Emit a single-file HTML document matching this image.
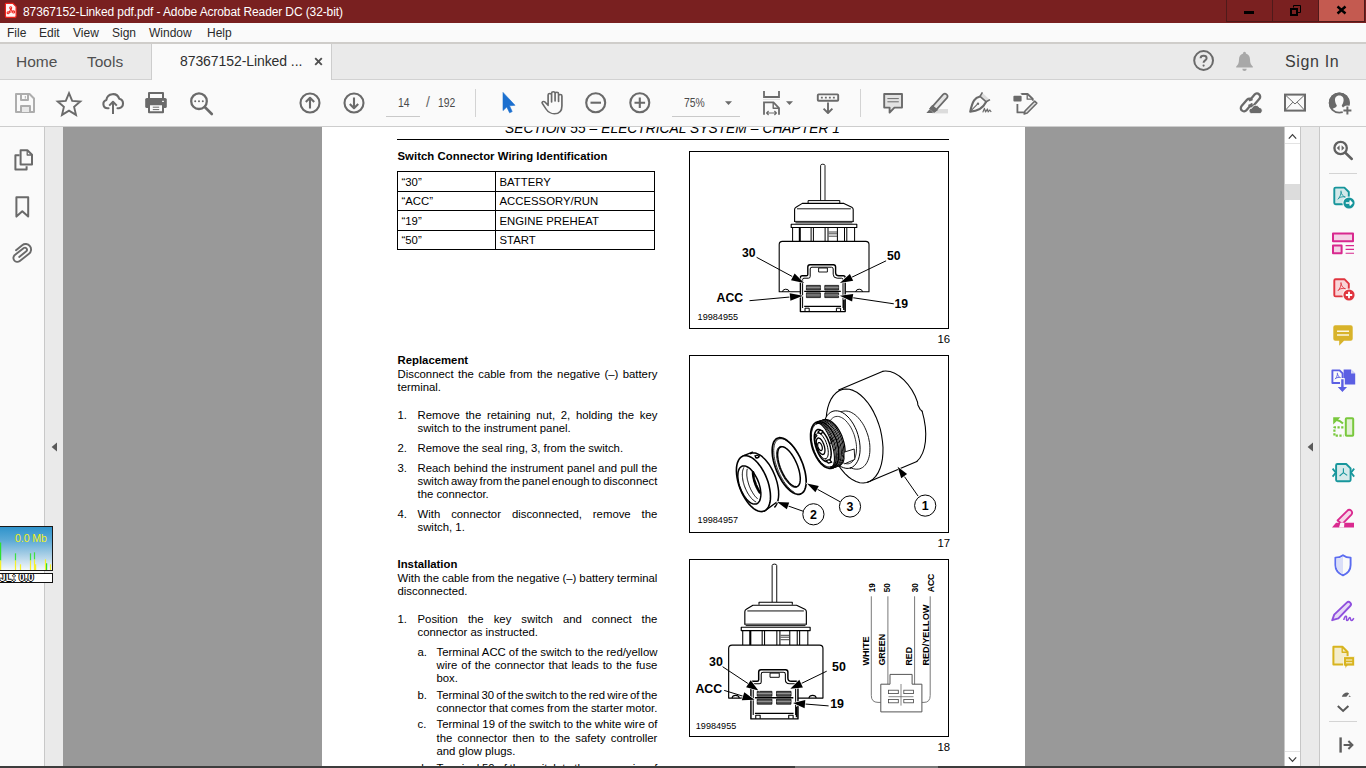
<!DOCTYPE html>
<html><head><meta charset="utf-8"><title>87367152-Linked pdf.pdf - Adobe Acrobat Reader DC (32-bit)</title>
<style>
*{box-sizing:border-box;margin:0;padding:0}
html,body{width:1366px;height:768px;overflow:hidden;background:#999;font-family:"Liberation Sans",sans-serif}
.abs{position:absolute}
#titlebar{position:absolute;left:0;top:0;width:1366px;height:23px;background:#792020}
#titlebar .t{position:absolute;left:23px;top:5px;font-size:12px;color:#fff;white-space:pre;letter-spacing:-0.11px;line-height:14px}
#menubar{position:absolute;left:0;top:23px;width:1366px;height:19px;background:#fafafa}
#menubar span{position:absolute;top:3px;font-size:12px;color:#2b2b2b;line-height:14px}
#menuline{position:absolute;left:0;top:42px;width:1366px;height:2px;background:#cfcdca}
#tabbar{z-index:2;position:absolute;left:0;top:44px;width:1366px;height:35px;background:#eaeaea}
#tabline{position:absolute;left:0;top:79px;width:1366px;height:1px;background:#d2d2d2}
#toolbar{position:absolute;left:0;top:80px;width:1366px;height:46px;background:#fafafa}
#toolline{position:absolute;left:0;top:126px;width:1366px;height:1px;background:#cdcdcd}
#docbg{position:absolute;left:63px;top:127px;width:1221px;height:639px;background:#999}
#page{position:absolute;left:322px;top:127px;width:703px;height:639px;background:#fff;overflow:hidden}
#leftpanel{position:absolute;left:0;top:127px;width:44px;height:639px;background:#fafafa}
#leftborder{position:absolute;left:44px;top:127px;width:1px;height:639px;background:#c8c8c8}
#leftsplit{position:absolute;left:45px;top:127px;width:18px;height:639px;background:#eaeaea}
#vscroll{position:absolute;left:1284px;top:127px;width:17px;height:639px;background:#fff;border-left:1px solid #c9c9c9;border-right:1px solid #c6c6c6}
#rightsplit{position:absolute;left:1301px;top:127px;width:18px;height:639px;background:#eaeaea}
#rightborder{position:absolute;left:1319px;top:127px;width:1px;height:639px;background:#c8c8c8}
#rightpanel{position:absolute;left:1320px;top:127px;width:46px;height:639px;background:#fafafa}
#bottombar{position:absolute;left:0;top:766px;width:1366px;height:2px;background:#3d3d3d}
.doc{font-size:11.35px;color:#000;line-height:13px}
.doc .l{position:absolute;white-space:pre}
.doc .j{position:absolute;white-space:nowrap;text-align:justify;text-align-last:justify}
.doc b{font-weight:bold}
.tb{font-size:12.5px;color:#4a4a4a;line-height:14px;white-space:pre;transform:scaleX(0.83);transform-origin:0 0}
</style></head><body>
<div id="titlebar"><svg class="abs" style="left:3.5px;top:2.4px" width="14" height="16.8" viewBox="0 0 15 18">
<path d="M2.2 1.5 H9.5 L13 5 V15 Q13 16.5 11.5 16.5 H2.8 Q1.5 16.5 1.5 15 V2.6 Q1.5 1.5 2.2 1.5 Z" fill="#fff4f2" stroke="#f0221c" stroke-width="1.3"/>
<g fill="none" stroke="#f0221c" stroke-width="1.1"><circle cx="7.2" cy="6.2" r="1.1"/><circle cx="4.4" cy="11.6" r="1.1"/><circle cx="10.3" cy="10.6" r="1.1"/><path d="M7.2 7.3 Q6.8 9.5 5.2 10.9 M7.4 7.3 Q8 9.2 9.4 10.1 M5.5 11.3 Q7.5 10.3 9.2 10.5"/></g>
</svg>
<div class="abs" style="left:1226px;top:0;width:47px;height:22px;border:1px solid #4f1a1a;border-top:none;background:#7a2020"></div>
<div class="abs" style="left:1272px;top:0;width:47px;height:22px;border:1px solid #4f1a1a;border-top:none;background:#7a2020"></div>
<div class="abs" style="left:1318px;top:0;width:47px;height:22px;border:1px solid #4f1a1a;border-top:none;background:#c45a50"></div>
<div class="abs" style="left:1244px;top:11px;width:10px;height:3px;background:#000"></div>
<svg class="abs" style="left:1288px;top:3px" width="15" height="14" viewBox="0 0 15 14"><path d="M5.5 4.5 V2.5 H12.5 V9.5 H10" fill="none" stroke="#000" stroke-width="1"/><rect x="3" y="6" width="6" height="6" fill="none" stroke="#000" stroke-width="2"/></svg>
<svg class="abs" style="left:1335px;top:5px" width="13" height="10" viewBox="0 0 13 10"><path d="M2.5 1.5 L10.5 8.5 M10.5 1.5 L2.5 8.5" stroke="#000" stroke-width="2.4" fill="none"/></svg>

<div class="t">87367152-Linked pdf.pdf - Adobe Acrobat Reader DC (32-bit)</div></div>
<div id="menubar"><span style="left:7px">File</span><span style="left:39px">Edit</span><span style="left:73px">View</span><span style="left:112px">Sign</span><span style="left:149px">Window</span><span style="left:207px">Help</span></div>
<div id="menuline"></div>
<div id="tabbar">
<div class="abs" style="left:16px;top:9px;font-size:15.5px;line-height:18px;color:#505050">Home</div>
<div class="abs" style="left:87px;top:9px;font-size:15.5px;line-height:18px;color:#505050">Tools</div>
<div class="abs" style="left:151px;top:0;width:181px;height:36px;background:#fafafa;border-left:1px solid #cdcdcd;border-right:1px solid #cdcdcd"></div>
<div class="abs" style="left:180px;top:9px;font-size:14px;line-height:16px;color:#2e2e2e;white-space:pre;letter-spacing:-0.08px">87367152-Linked ...</div>
<svg class="abs" style="left:313px;top:12px" width="11" height="11" viewBox="0 0 11 11"><path d="M2.2 2.2 L8.8 8.8 M8.8 2.2 L2.2 8.8" stroke="#505050" stroke-width="1.9"/></svg>
<svg class="abs" style="left:1190px;top:4px" width="70" height="28" viewBox="1190 48 70 28" fill="none">
<circle cx="1203.6" cy="60.5" r="9.4" stroke="#6a6a6a" stroke-width="2"/>
<path d="M1200.6 58.2 C1200.6 55 1206.6 55 1206.6 58.2 C1206.6 60.4 1203.6 60.4 1203.6 62.8" stroke="#6a6a6a" stroke-width="2"/>
<circle cx="1203.6" cy="65.6" r="1.1" fill="#6a6a6a"/>
<path d="M1244.5 51.8 C1245.6 51.8 1245.9 52.6 1245.9 53.4 C1248.8 54.2 1250 56.6 1250 59.6 C1250 63.4 1251.2 65.2 1252.8 66.6 V67.6 H1236.2 V66.6 C1237.8 65.2 1239 63.4 1239 59.6 C1239 56.6 1240.2 54.2 1243.1 53.4 C1243.1 52.6 1243.4 51.8 1244.5 51.8 Z" fill="#a8a8a8"/>
<path d="M1242.3 68.8 H1246.7 A2.2 2.2 0 0 1 1242.3 68.8 Z" fill="#a8a8a8"/>
</svg>
<div class="abs" style="left:1285px;top:8px;font-size:16px;line-height:20px;color:#3c3c3c;white-space:pre;letter-spacing:0.65px">Sign In</div>

</div>
<div id="tabline"></div>
<div id="toolbar">
<svg class="abs" style="left:0;top:0" width="1366" height="46" viewBox="0 80 1366 46" fill="none" stroke="#6a6a6a" stroke-width="2" stroke-linejoin="round" stroke-linecap="butt">
<!-- save (disabled) -->
<g stroke="#adadad">
<path d="M16 94 H29.5 L34 98.5 V112 H16 Z" fill="#fafafa"/>
<path d="M21 94 V100 H28 V94" />
<path d="M25.3 96 V98.6" stroke-width="1"/>
<path d="M21 112 V106 H30 V112" fill="#e9e9e9"/>
</g>
<!-- star -->
<path d="M69 93.2 L72.2 100.9 L80.3 101.5 L74.1 106.9 L76 114.9 L69 110.6 L62 114.9 L63.9 106.9 L57.7 101.5 L65.8 100.9 Z" stroke-width="1.9" stroke-linejoin="miter"/>
<!-- cloud upload -->
<path d="M108.5 108.3 H107.6 A4.3 4.3 0 0 1 106.4 99.9 A6.6 6.6 0 0 1 119.2 98.7 A4.9 4.9 0 0 1 119 108.3 H117.5" stroke-width="2.1" stroke-linecap="round"/>
<path d="M113 114 V102.3 M109.2 105.6 L113 101.8 L116.8 105.6" stroke-width="2"/>
<!-- printer -->
<g>
<rect x="149" y="93" width="14" height="6" stroke-width="2" fill="#fafafa"/>
<rect x="145.2" y="98" width="21.6" height="10" rx="1.6" fill="#6a6a6a" stroke="none"/>
<rect x="149" y="104.3" width="14" height="8" fill="#fafafa" stroke-width="2"/>
<path d="M152.8 107.2 H159.2 M152.8 109.6 H159.2" stroke-width="1"/>
<rect x="162" y="100.8" width="2" height="1.2" fill="#e8e8e8" stroke="none"/>
</g>
<!-- search -->
<circle cx="199" cy="101.2" r="7.8" stroke-width="2.3"/>
<path d="M204.8 107 L211.8 114" stroke-width="2.6" stroke-linecap="round"/>
<g fill="#6a6a6a" stroke="none"><circle cx="195.2" cy="101.2" r="1"/><circle cx="199" cy="101.2" r="1"/><circle cx="202.8" cy="101.2" r="1"/></g>
<!-- up / down -->
<circle cx="310" cy="103" r="9.5" stroke-width="2.1"/>
<path d="M310 108.6 V98.2 M305.8 102 L310 97.8 L314.2 102" stroke-width="2.1"/>
<circle cx="354" cy="103" r="9.5" stroke-width="2.1"/>
<path d="M354 97.4 V107.8 M349.8 104 L354 108.2 L358.2 104" stroke-width="2.1"/>
<!-- page field underline -->
<path d="M386 116.5 H420" stroke="#c9c9c9" stroke-width="1"/>
<path d="M475.5 89 V117" stroke="#d3d3d3" stroke-width="1"/>
<!-- pointer -->
<path d="M503 92.4 V110.6 L506.8 107 L509.6 112.8 L512.2 111.6 L509.5 105.8 L515 105.3 Z" fill="#1b6fcf" stroke="#1b6fcf" stroke-width="0.6"/>
<!-- hand -->
<path d="M547.2 104.5 V95 a1.5 1.5 0 0 1 3 0 V102 M550.2 100 V93.2 a1.5 1.5 0 0 1 3 0 V101 M553.2 100 V93.8 a1.5 1.5 0 0 1 3 0 V101.5 M556.2 101 V96 a1.45 1.45 0 0 1 2.9 0 V106 C559.1 111 556.5 113.8 552.6 113.8 C549.2 113.8 547.4 112.4 545.4 109 L542.2 103.4 C541.4 102 543.2 100.6 544.5 102 L547.2 105.4" stroke-width="1.45" stroke-linecap="round" transform="translate(541.5 0) scale(1.16 1) translate(-541.5 0)"/>
<!-- minus / plus -->
<circle cx="595.7" cy="102.7" r="9.5" stroke-width="2.1"/>
<path d="M590.5 102.7 H601" stroke-width="2.1"/>
<circle cx="639.8" cy="102.7" r="9.5" stroke-width="2.1"/>
<path d="M634.5 102.7 H645.1 M639.8 97.4 V108" stroke-width="2.1"/>
<!-- zoom field -->
<path d="M672 116.5 H740" stroke="#c9c9c9" stroke-width="1"/>
<path d="M725 101.3 H732 L728.5 105 Z" fill="#6a6a6a" stroke="none"/>
<!-- fit page -->
<path d="M764 91 V97 H779 V91" stroke-width="1.8" stroke-linejoin="miter"/>
<path d="M763 99.4 H780" stroke="#dedede" stroke-width="1"/>
<path d="M764 114.8 V102.4 H773.5 L779 108 V114.8" stroke-width="1.8" stroke-linejoin="miter"/>
<path d="M773.2 102.6 V108.2 H779" stroke-width="1.4"/>
<path d="M766.8 113 H776.2 M768.6 111 L766.6 113 L768.6 115 M774.4 111 L776.4 113 L774.4 115" stroke-width="1.2"/>
<path d="M786 101.3 H793 L789.5 105 Z" fill="#6a6a6a" stroke="none"/>
<!-- scroll/keyboard -->
<rect x="817.8" y="94.4" width="20.4" height="6.4" rx="0.8" stroke-width="1.9"/>
<path d="M820.9 97.6 H835.6" stroke-width="1.7" stroke-dasharray="1.9 2.1"/>
<path d="M828 102.6 V112.6 M823.6 108.6 L828 113 L832.4 108.6" stroke-width="1.9"/>
<path d="M860.5 89 V117" stroke="#d3d3d3" stroke-width="1"/>
<!-- comment -->
<path d="M884.2 94 H902 V107.6 H894.4 L889.6 112.6 V107.6 H884.2 Z" fill="#e3e3e3" stroke-width="1.9"/>
<path d="M887.4 98.6 H898.8 M887.4 101.8 H898.8" stroke-width="1"/>
<!-- highlighter -->
<path d="M932 109 H948 V113.4 H932 Z" fill="#dcdcdc" stroke="none"/>
<path d="M943.2 94.4 L932.6 106.4 L936.4 109.6 L947.2 97.6 A2.6 2.6 0 0 0 943.2 94.4 Z" fill="#e3e3e3" stroke-width="1.7"/>
<path d="M932.2 105.4 L937.4 110 L934 112.4 L929.6 108.6 Z" fill="#6a6a6a" stroke-width="1"/>
<path d="M926.4 113 L929.6 109.2 L933.2 112.4 L931.8 113 Z" fill="#6a6a6a" stroke="none"/>
<!-- sign pen -->
<path d="M982 92.6 L989.6 99.4 L986.4 101.6 L980 96 Z" fill="#dedede" stroke="none"/>
<path d="M982.4 92.4 L980 96.4 L986.2 101.8 L990 99.6" stroke-width="1.6"/>
<path d="M980 96.4 C975 97.6 972.6 100.6 970.2 111.6 C977 111.4 982.6 109 986.2 101.8" stroke-width="2.1"/>
<path d="M970.4 111.4 L977.2 104.4" stroke-width="1.2"/><circle cx="978" cy="103.8" r="1.2" fill="#6a6a6a" stroke="none"/>
<path d="M982.8 112.4 L984.4 108.4 L985.6 112 L987.4 109 L988.2 112 L989.8 110 L991.2 112" stroke-width="1.2"/>
<!-- stamp/edit -->
<path d="M1021.4 94 H1027.6 L1032.8 99 V100.8 M1017.4 104 V112.4 H1024.6 M1021.4 94 V93.6" stroke-width="1.8"/>
<path d="M1027.2 93.8 V99.2 H1032.6" stroke-width="1.3"/>
<rect x="1013.4" y="95.8" width="8.2" height="5.8" rx="1" fill="#6a6a6a" stroke="none"/>
<path d="M1034.6 101.2 L1036.8 103.2 L1027.2 113 L1024.2 114 L1025 111 Z" fill="#e3e3e3" stroke-width="1.6"/>
<!-- link cloud -->
<path d="M1249.8 100.2 L1254.6 94.6 A3.1 3.1 0 0 1 1259.4 98.8 L1253.6 105.4 A3.1 3.1 0 0 1 1249.4 105.4" stroke-width="2.3" stroke-linecap="round"/>
<path d="M1251.6 104.2 L1246.4 110.2 A3.1 3.1 0 0 1 1241.6 106 L1247.2 99.6 A3.1 3.1 0 0 1 1251.6 99.6" stroke-width="2.3" stroke-linecap="round"/>
<path d="M1251.6 113.6 A2.7 2.7 0 0 1 1251.8 108.2 A4 4 0 0 1 1259.2 107.4 A3.2 3.2 0 0 1 1260.2 113.6 Z" fill="#6a6a6a" stroke="#fafafa" stroke-width="0.8"/>
<!-- mail -->
<rect x="1285" y="94.6" width="20" height="16" stroke-width="2" stroke-linejoin="miter"/>
<path d="M1285.6 95.2 L1295 104 L1304.4 95.2 M1285.6 110 L1292.8 102.2 M1304.4 110 L1297.2 102.2" stroke-width="1"/>
<!-- user plus -->
<circle cx="1339.3" cy="103" r="10.5" fill="#6a6a6a" stroke="none"/>
<path d="M1339.3 95.6 C1342.6 95.6 1343.8 98 1343.6 100.6 C1343.4 103 1342.4 104.4 1341.8 105.2 C1341.6 106.8 1343 107.4 1346.6 109 C1347.4 109.4 1347.6 110 1347.4 110.6 A10.5 10.5 0 0 1 1331.2 110.6 C1331 110 1331.2 109.4 1332 109 C1335.6 107.4 1337 106.8 1336.8 105.2 C1336.2 104.4 1335.2 103 1335 100.6 C1334.8 98 1336 95.6 1339.3 95.6 Z" fill="#fafafa" stroke="none"/>
<circle cx="1339.3" cy="103" r="9.7" fill="none" stroke="#6a6a6a" stroke-width="1.7"/>
<circle cx="1347.4" cy="110.4" r="5" fill="#fafafa" stroke="none"/>
<path d="M1343.4 110.4 H1351.4 M1347.4 106.4 V114.4" stroke-width="2"/>
</svg>
<div class="abs tb" style="left:397.5px;top:16px;width:12px;">14</div>
<div class="abs tb" style="left:426px;top:15px;font-size:14px;transform:none;color:#666">/</div>
<div class="abs tb" style="left:437.5px;top:16px;">192</div>
<div class="abs tb" style="left:683.5px;top:16px;">75%</div>

</div>
<div id="toolline"></div>
<div id="docbg"></div>
<div id="page" class="doc">
<div class="l" style="left:183px;top:-6px;font-size:13.8px;font-style:italic;line-height:16px;width:335px;text-align:justify;text-align-last:justify;white-space:nowrap">SECTION 55 – ELECTRICAL SYSTEM – CHAPTER 1</div>
<div class="abs" style="left:75px;top:12px;width:552px;height:1px;background:#000"></div>
<div class="l" style="left:75.5px;top:23px;font-weight:bold;letter-spacing:0.04px;">Switch Connector Wiring Identification</div>
<div class="abs" style="left:75px;top:44px;width:258px;height:79px;border:1px solid #000"></div>
<div class="abs" style="left:173px;top:44px;width:1px;height:79px;background:#000"></div>
<div class="abs" style="left:75px;top:64px;width:258px;height:1px;background:#000"></div>
<div class="abs" style="left:75px;top:83px;width:258px;height:1px;background:#000"></div>
<div class="abs" style="left:75px;top:103px;width:258px;height:1px;background:#000"></div>
<div class="l" style="left:79.5px;top:49px;">“30”</div>
<div class="l" style="left:177.5px;top:49px;">BATTERY</div>
<div class="l" style="left:79.5px;top:68px;">“ACC”</div>
<div class="l" style="left:177.5px;top:68px;">ACCESSORY/RUN</div>
<div class="l" style="left:79.5px;top:88px;">“19”</div>
<div class="l" style="left:177.5px;top:88px;">ENGINE PREHEAT</div>
<div class="l" style="left:79.5px;top:107px;">“50”</div>
<div class="l" style="left:177.5px;top:107px;">START</div>
<div class="l" style="left:75.5px;top:227px;font-weight:bold;">Replacement</div>
<div class="l" style="left:75.5px;top:241px;word-spacing:1.273px;">Disconnect the cable from the negative (–) battery</div>
<div class="l" style="left:75.5px;top:254px;">terminal.</div>
<div class="l" style="left:75.5px;top:282px;">1.</div>
<div class="l" style="left:95.5px;top:282px;word-spacing:2.558px;">Remove the retaining nut, 2, holding the key</div>
<div class="l" style="left:95.5px;top:295px;">switch to the instrument panel.</div>
<div class="l" style="left:75.5px;top:315px;">2.</div>
<div class="l" style="left:95.5px;top:315px;">Remove the seal ring, 3, from the switch.</div>
<div class="l" style="left:75.5px;top:335px;">3.</div>
<div class="l" style="left:95.5px;top:335px;word-spacing:0.302px;">Reach behind the instrument panel and pull the</div>
<div class="l" style="left:95.5px;top:348px;word-spacing:-1.136px;">switch away from the panel enough to disconnect</div>
<div class="l" style="left:95.5px;top:361px;">the connector.</div>
<div class="l" style="left:75.5px;top:381px;">4.</div>
<div class="l" style="left:95.5px;top:381px;word-spacing:7.794px;">With connector disconnected, remove the</div>
<div class="l" style="left:95.5px;top:394px;">switch, 1.</div>
<div class="l" style="left:75.5px;top:431px;font-weight:bold;">Installation</div>
<div class="l" style="left:75.5px;top:445px;word-spacing:-0.146px;">With the cable from the negative (–) battery terminal</div>
<div class="l" style="left:75.5px;top:458px;">disconnected.</div>
<div class="l" style="left:75.5px;top:486px;">1.</div>
<div class="l" style="left:95.5px;top:486px;word-spacing:6.876px;">Position the key switch and connect the</div>
<div class="l" style="left:95.5px;top:499px;">connector as instructed.</div>
<div class="l" style="left:95.5px;top:519px;">a.</div>
<div class="l" style="left:114.5px;top:519px;word-spacing:-0.060px;">Terminal ACC of the switch to the red/yellow</div>
<div class="l" style="left:114.5px;top:532px;word-spacing:0.889px;">wire of the connector that leads to the fuse</div>
<div class="l" style="left:114.5px;top:545px;">box.</div>
<div class="l" style="left:95.5px;top:562px;">b.</div>
<div class="l" style="left:114.5px;top:562px;word-spacing:-1.053px;">Terminal 30 of the switch to the red wire of the</div>
<div class="l" style="left:114.5px;top:575px;word-spacing:-0.385px;">connector that comes from the starter motor.</div>
<div class="l" style="left:95.5px;top:591px;">c.</div>
<div class="l" style="left:114.5px;top:591px;word-spacing:-0.188px;">Terminal 19 of the switch to the white wire of</div>
<div class="l" style="left:114.5px;top:605px;word-spacing:2.027px;">the connector then to the safety controller</div>
<div class="l" style="left:114.5px;top:618px;">and glow plugs.</div>
<div class="l" style="left:95.5px;top:635px;">d.</div>
<div class="l" style="left:114.5px;top:635px;word-spacing:-0.469px;">Terminal 50 of the switch to the green wire of</div>
<div class="abs" style="left:367px;top:24px;width:260px;height:178px;border:1px solid #000"></div>
<div class="l" style="left:608px;top:206px;width:20px;text-align:right">16</div>
<div class="abs" style="left:367px;top:228px;width:260px;height:178px;border:1px solid #000"></div>
<div class="l" style="left:608px;top:410px;width:20px;text-align:right">17</div>
<div class="abs" style="left:367px;top:432px;width:260px;height:178px;border:1px solid #000"></div>
<div class="l" style="left:608px;top:614px;width:20px;text-align:right">18</div>
<svg class="abs" style="left:367px;top:24px" width="260" height="178" viewBox="689 151 260 178"><g transform="translate(0,0)" fill="none" stroke="#000" stroke-width="1" stroke-linejoin="round">
<path d="M820.6 200.4 V165.6 Q820.6 164.2 822.8 164.2 Q825 164.2 825 165.6 V200.4" stroke-width="0.9"/>
<path d="M808.1 203 V200.6 H839.8 V203" />
<path d="M794.6 222 V209.6 Q794.6 208 796 207.2 L802.3 203.4 H843.9 L851.8 207.2 Q853.2 208 853.2 209.6 V222" stroke-width="1.1"/>
<path d="M797 208.8 H850.8" stroke-width="0.9"/>
<path d="M794.6 221.4 H853.2 M795.4 222.8 H852.4" stroke-width="0.9"/>
<rect x="791.2" y="224.3" width="65.6" height="3.2" stroke-width="1.1"/>
<g stroke-width="1">
<path d="M792.6 227.6 V241.2"/>
<path d="M799.8 227.6 V241.2" stroke-width="2"/>
<path d="M811.1 227.6 V241.2 M813.4 227.6 V241.2"/>
<path d="M825.1 227.6 V241.2 M828 227.6 V241.2"/>
<path d="M837.4 227.6 V241.2"/>
<path d="M844.5 227.6 V241.2 M846.8 227.6 V241.2"/>
<path d="M854.6 227.6 V241.2"/>
<path d="M828.6 232 H837 M828.6 233.8 H837 M828.6 236.2 H837" stroke-width="0.9" stroke="#333"/>
</g>
<path d="M800.4 291.8 H779.2 V244.6 Q779.2 241.4 782.4 241.4 H865.8 Q869 241.4 869 244.6 V291.8 H845.2" stroke-width="1.1"/>
<path d="M782.4 291.8 Q782.8 289.2 785.8 289.2 Q788.8 289.2 789.4 291.8 M855.6 291.8 Q856.2 289.2 859.2 289.2 Q862.2 289.2 862.6 291.8" stroke-width="1"/>
<!-- connector outer -->
<path d="M800.4 311.6 V277.6 Q800.4 275.8 802.2 275.8 H806.4 Q807.8 275.8 807.8 274.4 V267 Q807.8 264.8 810 264.8 H833.4 Q835.6 264.8 835.6 267 V272.6 Q835.6 275.8 838.8 275.8 H843.4 Q845.2 275.8 845.2 277.6 V311.6 H800.4 Z" stroke-width="1.4"/>
<path d="M802.6 308 V279.6 Q802.6 278.2 804 278.2 H808.4 Q810.2 278.2 810.2 276.4 V269 Q810.2 267.2 812 267.2 H831.4 Q833.2 267.2 833.2 269 V274.2 Q833.2 278.2 837.2 278.2 H841.6 Q843 278.2 843 279.6 V308" stroke-width="1"/>
<path d="M804.2 306.4 H841" stroke-width="1.2"/>
<path d="M805 311.4 V308.2 H809.2 V311.4 M836.4 311.4 V308.2 H840.6 V311.4" stroke-width="1"/>
<path d="M843.9 300 V310" stroke-width="1.6"/>
<rect x="818.6" y="268" width="8.8" height="4" stroke-width="0.9"/>
<!-- terminals -->
<g fill="#555" stroke="#111" stroke-width="0.8">
<rect x="806.4" y="285.4" width="14" height="4.6"/><rect x="824.8" y="285.4" width="13.8" height="4.6"/>
<rect x="806.4" y="292.8" width="14" height="4.8"/><rect x="824.8" y="292.8" width="13.8" height="4.8"/>
</g>
<path d="M806.4 287.4 H820.4 M824.8 287.4 H838.6 M806.4 295 H820.4 M824.8 295 H838.6" stroke="#bbb" stroke-width="0.6"/>
<path d="M804.2 291.4 H840.8" stroke-width="1.4"/>
</g><path d="M756.6 257.3 L792.8 276.8" stroke="#000" stroke-width="1" fill="none"/><path d="M804.2 283.0 L791.0 280.2 L794.6 273.5 Z" fill="#000" stroke="#fff" stroke-width="1.2" paint-order="stroke"/><path d="M886.1 260.8 L851.5 277.4" stroke="#000" stroke-width="1" fill="none"/><path d="M839.8 283.0 L849.9 274.0 L853.2 280.8 Z" fill="#000" stroke="#fff" stroke-width="1.2" paint-order="stroke"/><path d="M749.5 300.7 L790.1 297.0" stroke="#000" stroke-width="1" fill="none"/><path d="M803.0 295.8 L790.4 300.8 L789.7 293.2 Z" fill="#000" stroke="#fff" stroke-width="1.2" paint-order="stroke"/><path d="M893.8 303.8 L852.7 297.7" stroke="#000" stroke-width="1" fill="none"/><path d="M839.8 295.8 L853.2 293.9 L852.1 301.5 Z" fill="#000" stroke="#fff" stroke-width="1.2" paint-order="stroke"/><g font-family="Liberation Sans" font-weight="bold" font-size="12.2" fill="#000"><text x="742" y="257.2">30</text><text x="887" y="259.6">50</text><text x="716.6" y="301.6">ACC</text><text x="894.4" y="307.8">19</text></g><text x="697.6" y="319.6" font-family="Liberation Sans" font-size="9.1" fill="#000">19984955</text></svg>
<svg class="abs" style="left:367px;top:228px" width="260" height="178" viewBox="689 355 260 178"><g fill="none" stroke="#000" stroke-linejoin="round" stroke-linecap="round"><path d="M838.7 389.9 L883.0 371.2" stroke-width="1.1" fill="none"/><path d="M883.0 371.2 C897.7 369.1 912.3 386.2 917.5 402.1" stroke-width="1.1"/><path d="M917.5 402.1 L917.9 404.9 L920.1 409.3 L922.1 411.2" stroke-width="1.1" fill="none"/><path d="M922.1 411.2 C928.6 433.4 926.2 452.9 916.9 461.4" stroke-width="1.1"/><path d="M916.9 461.4 L867.6 482.2" stroke-width="1.1" fill="none"/><path d="M866.7 482.5 L863.3 483.0 L859.7 482.7 L856.0 481.5 L852.2 479.6 L848.6 477.0 L845.0 473.6 L841.6 469.7 L838.4 465.1 L835.4 460.0 L832.8 454.5 L830.6 448.7 L828.8 442.7 L827.4 436.6 L826.5 430.5 L826.1 424.4 L826.1 418.6 L826.7 413.0 L827.7 407.8 L829.2 403.2 L831.1 399.1 L833.4 395.6 L836.1 392.8 L839.1 390.7 L842.3 389.4 L845.8 389.0 L849.4 389.3 L853.1 390.4 L856.8 392.3 L860.5 395.0 L864.1 398.3 L867.5 402.3 L870.7 406.9 L873.6 411.9 L876.2 417.4 L878.4 423.2 L880.3 429.2 L881.6 435.4 L882.5 441.5 L883.0 447.5 L882.9 453.4 L882.4 458.9 L881.4 464.1 L879.9 468.8 L878.0 472.9 L875.7 476.4 L873.0 479.2 L870.0 481.2 L866.7 482.5 Z" stroke-width="1.1" fill="none"/><path d="M835.1 417.8 L836.0 416.3 L837.1 414.9 L838.2 413.7 L839.5 412.7 L840.8 412.0 L842.3 411.4 L843.8 411.1 L845.3 411.0 L846.9 411.1 L848.5 411.4 L850.2 411.9 L851.8 412.7 L853.5 413.7 L855.1 414.8 L856.7 416.2 L858.2 417.7 L859.7 419.5 L861.1 421.3 L862.5 423.3 L863.8 425.5 L864.9 427.7 L866.0 430.1 L866.9 432.5 L867.8 435.0 L868.5 437.5 L869.0 440.0 L869.5 442.6 L869.8 445.1 L869.9 447.6 L869.9 450.0 L869.8 452.4 L869.5 454.6 L869.1 456.8 L868.5 458.8 L867.8 460.7 L867.0 462.4 L866.1 463.9 L865.0 465.3 L863.8 466.5 L862.6 467.5 L861.2 468.2 L859.8 468.8 L858.3 469.1 L856.8 469.2 L855.2 469.1 L853.6 468.8 L851.9 468.3 L850.3 467.5" stroke-width="0.9" fill="none"/><path d="M850.4 468.0 L848.2 468.4 L845.8 468.3 L843.5 467.7 L841.1 466.7 L838.7 465.1 L836.3 463.2 L834.1 460.8 L831.9 458.1 L830.0 455.0 L828.2 451.7 L826.7 448.2 L825.4 444.6 L824.4 440.8 L823.7 437.0 L823.3 433.3 L823.2 429.7 L823.5 426.2 L824.0 423.0 L824.9 420.1 L826.0 417.5 L827.4 415.2 L829.1 413.4 L830.9 412.1 L833.0 411.2 L835.2 410.8 L837.5 410.9 L839.9 411.4 L842.3 412.5 L844.7 414.0 L847.0 416.0 L849.3 418.3 L851.4 421.1 L853.4 424.1 L855.1 427.4 L856.7 430.9 L857.9 434.6 L858.9 438.4 L859.6 442.1 L860.0 445.9 L860.1 449.5 L859.9 452.9 L859.3 456.2 L858.5 459.1 L857.3 461.7 L855.9 463.9 L854.3 465.7 L852.4 467.1 L850.4 468.0 Z" stroke-width="1.0" fill="#fff"/><path d="M827.8 431.7 L827.9 429.5 L828.1 427.4 L828.5 425.4 L829.0 423.6 L829.7 421.9 L830.4 420.5 L831.3 419.2 L832.4 418.2 L833.5 417.4 L834.7 416.8 L835.9 416.5 L837.3 416.4 L838.7 416.5 L840.1 416.9 L841.6 417.6 L843.0 418.4 L844.5 419.5 L845.9 420.8 L847.3 422.4 L848.6 424.1 L849.9 425.9 L851.1 427.9 L852.2 430.1 L853.2 432.3 L854.1 434.6 L854.8 437.0 L855.4 439.4 L855.9 441.8 L856.3 444.2 L856.5 446.6 L856.5 448.8 L856.4 451.0 L856.2 453.1 L855.8 455.1 L855.3 456.9 L854.6 458.5 L853.8 459.9 L852.9 461.1 L851.9 462.2 L850.7 462.9 L849.5 463.5 L848.2 463.8 L846.9 463.8 L845.5 463.6 L844.0 463.2 L842.6 462.5 L841.1 461.6 L839.7 460.5" stroke-width="0.8" fill="none"/><path d="M838.5 466.1 L836.8 466.4 L835.1 466.3 L833.3 465.8 L831.5 464.9 L829.6 463.7 L827.8 462.1 L826.0 460.1 L824.3 457.9 L822.8 455.4 L821.3 452.7 L820.1 449.8 L819.0 446.9 L818.1 443.8 L817.4 440.7 L817.0 437.7 L816.8 434.8 L816.9 432.0 L817.2 429.4 L817.7 427.0 L818.5 424.9 L819.4 423.1 L820.6 421.6 L822.0 420.6 L823.5 419.8 L825.1 419.5 L826.8 419.6 L828.6 420.1 L830.5 421.0 L832.3 422.3 L834.1 423.9 L835.9 425.8 L837.6 428.0 L839.2 430.5 L840.6 433.2 L841.9 436.1 L842.9 439.1 L843.8 442.1 L844.5 445.2 L844.9 448.2 L845.1 451.1 L845.0 453.9 L844.7 456.5 L844.2 458.9 L843.5 461.0 L842.5 462.8 L841.3 464.3 L840.0 465.4 L838.5 466.1 Z" stroke-width="1.3" fill="#fff"/><path d="M844.3 452.1 L854.2 449.0 L854.8 459.4 L844.8 463.8" stroke-width="0.9" fill="#fff"/><path d="M837.2 466.5 L835.6 466.8 L833.9 466.7 L832.1 466.2 L830.2 465.3 L828.4 464.1 L826.6 462.5 L824.8 460.5 L823.1 458.3 L821.5 455.8 L820.1 453.1 L818.8 450.2 L817.7 447.3 L816.9 444.2 L816.2 441.1 L815.8 438.1 L815.6 435.2 L815.6 432.4 L815.9 429.8 L816.5 427.4 L817.2 425.3 L818.2 423.5 L819.4 422.0 L820.7 421.0 L822.2 420.3 L823.8 419.9 L825.6 420.0 L827.4 420.5 L829.2 421.4 L831.1 422.7 L832.9 424.3 L834.7 426.2 L836.4 428.4 L837.9 430.9 L839.4 433.6 L840.6 436.5 L841.7 439.5 L842.6 442.5 L843.2 445.6 L843.7 448.6 L843.9 451.5 L843.8 454.3 L843.5 457.0 L843.0 459.3 L842.2 461.4 L841.3 463.2 L840.1 464.7 L838.7 465.8 L837.2 466.5 Z" stroke-width="1.1" fill="#fff"/><path d="M836.0 466.9 L834.4 467.2 L832.6 467.1 L830.8 466.6 L829.0 465.7 L827.2 464.5 L825.3 462.9 L823.6 460.9 L821.9 458.7 L820.3 456.2 L818.9 453.5 L817.6 450.6 L816.5 447.7 L815.6 444.6 L815.0 441.5 L814.5 438.5 L814.4 435.6 L814.4 432.8 L814.7 430.2 L815.2 427.8 L816.0 425.7 L817.0 423.9 L818.1 422.4 L819.5 421.4 L821.0 420.7 L822.6 420.3 L824.3 420.4 L826.1 420.9 L828.0 421.8 L829.8 423.1 L831.7 424.7 L833.4 426.6 L835.1 428.8 L836.7 431.3 L838.1 434.0 L839.4 436.9 L840.5 439.9 L841.4 442.9 L842.0 446.0 L842.4 449.0 L842.6 451.9 L842.6 454.7 L842.3 457.4 L841.7 459.7 L841.0 461.8 L840.0 463.6 L838.8 465.1 L837.5 466.2 L836.0 466.9 Z" stroke-width="0.9" fill="#fff"/><path d="M834.8 467.3 L833.1 467.6 L831.4 467.5 L829.6 467.0 L827.8 466.1 L825.9 464.9 L824.1 463.3 L822.3 461.3 L820.6 459.1 L819.1 456.6 L817.6 453.9 L816.4 451.0 L815.3 448.1 L814.4 445.0 L813.7 441.9 L813.3 438.9 L813.1 436.0 L813.2 433.2 L813.5 430.6 L814.0 428.2 L814.8 426.1 L815.7 424.3 L816.9 422.9 L818.2 421.8 L819.7 421.1 L821.4 420.7 L823.1 420.8 L824.9 421.3 L826.7 422.2 L828.6 423.5 L830.4 425.1 L832.2 427.0 L833.9 429.2 L835.5 431.7 L836.9 434.4 L838.2 437.3 L839.2 440.3 L840.1 443.3 L840.8 446.4 L841.2 449.4 L841.4 452.3 L841.3 455.1 L841.0 457.8 L840.5 460.1 L839.7 462.2 L838.8 464.0 L837.6 465.5 L836.3 466.6 L834.8 467.3 Z" stroke-width="1.1" fill="#fff"/><path d="M833.5 467.7 L831.9 468.0 L830.2 467.9 L828.4 467.4 L826.5 466.5 L824.7 465.3 L822.9 463.7 L821.1 461.7 L819.4 459.5 L817.8 457.0 L816.4 454.3 L815.1 451.4 L814.0 448.5 L813.2 445.4 L812.5 442.3 L812.1 439.3 L811.9 436.4 L811.9 433.6 L812.2 431.0 L812.8 428.6 L813.5 426.5 L814.5 424.7 L815.7 423.3 L817.0 422.2 L818.5 421.5 L820.1 421.1 L821.9 421.2 L823.7 421.7 L825.5 422.6 L827.4 423.9 L829.2 425.5 L831.0 427.4 L832.6 429.6 L834.2 432.1 L835.7 434.8 L836.9 437.7 L838.0 440.7 L838.9 443.7 L839.5 446.8 L840.0 449.8 L840.2 452.8 L840.1 455.5 L839.8 458.2 L839.3 460.5 L838.5 462.6 L837.5 464.4 L836.4 465.9 L835.0 467.0 L833.5 467.7 Z" stroke-width="0.9" fill="#fff"/><path d="M832.2 468.1 L830.6 468.4 L828.8 468.3 L827.0 467.8 L825.2 467.0 L823.3 465.7 L821.5 464.1 L819.8 462.2 L818.1 459.9 L816.5 457.4 L815.1 454.7 L813.8 451.9 L812.7 448.9 L811.8 445.8 L811.2 442.8 L810.7 439.8 L810.6 436.8 L810.6 434.0 L810.9 431.4 L811.4 429.0 L812.2 426.9 L813.2 425.1 L814.3 423.7 L815.7 422.6 L817.2 421.9 L818.8 421.6 L820.5 421.7 L822.3 422.2 L824.2 423.0 L826.0 424.3 L827.9 425.9 L829.6 427.8 L831.3 430.1 L832.9 432.6 L834.3 435.3 L835.6 438.1 L836.7 441.1 L837.5 444.2 L838.2 447.2 L838.6 450.2 L838.8 453.2 L838.8 456.0 L838.5 458.6 L837.9 461.0 L837.2 463.1 L836.2 464.9 L835.0 466.3 L833.7 467.4 L832.2 468.1 Z" stroke-width="1.7" fill="#fff"/><path d="M816.3 423.0 L817.0 422.6 L817.7 422.4 L818.5 422.3 L819.3 422.3 L820.2 422.4 L821.0 422.7 L821.9 423.0 L822.7 423.4 L823.6 423.9 L824.5 424.6 L825.4 425.3 L826.3 426.1 L827.2 427.1 L828.0 428.1 L828.9 429.1 L829.7 430.3 L830.5 431.5 L831.3 432.8 L832.0 434.2 L832.8 435.6 L833.4 437.0 L834.0 438.5 L834.6 440.1 L835.1 441.6 L835.6 443.2 L836.1 444.7 L836.4 446.3 L836.7 447.9 L837.0 449.4 L837.2 451.0 L837.3 452.5 L837.4 453.9 L837.4 455.3 L837.4 456.7 L837.3 458.0 L837.1 459.3 L836.9 460.5 L836.6 461.6 L836.2 462.7 L835.8 463.6 L835.4 464.5 L834.8 465.2 L834.3 465.9 L833.7 466.5 L833.0 467.0 L832.3 467.3 L831.6 467.6 L830.8 467.8" stroke-width="0.9" fill="none"/><path d="M816.5 423.2 L817.1 422.9 L817.8 422.8 L818.5 422.7 L819.2 422.7 L819.9 422.8 L820.7 423.1 L821.5 423.4 L822.3 423.9 L823.1 424.4 L823.9 425.1 L824.7 425.8 L825.5 426.6 L826.4 427.6 L827.2 428.6 L828.0 429.7 L828.7 430.8 L829.5 432.0 L830.2 433.3 L830.9 434.7 L831.6 436.1 L832.2 437.5 L832.8 439.0 L833.4 440.5 L833.9 442.0 L834.4 443.5 L834.8 445.1 L835.2 446.6 L835.5 448.2 L835.8 449.7 L836.0 451.2 L836.2 452.7 L836.3 454.1 L836.3 455.5 L836.3 456.8 L836.3 458.1 L836.2 459.4 L836.0 460.5 L835.8 461.6 L835.5 462.6 L835.2 463.5 L834.8 464.3 L834.3 465.1 L833.9 465.7 L833.3 466.3 L832.8 466.7 L832.2 467.1 L831.5 467.3 L830.9 467.4" stroke-width="1.1" fill="none"/><path d="M816.7 423.5 L817.2 423.2 L817.8 423.1 L818.4 423.0 L819.1 423.1 L819.7 423.2 L820.4 423.5 L821.1 423.9 L821.8 424.3 L822.5 424.9 L823.3 425.5 L824.0 426.3 L824.8 427.1 L825.5 428.1 L826.3 429.1 L827.0 430.2 L827.7 431.3 L828.4 432.5 L829.1 433.8 L829.8 435.2 L830.4 436.5 L831.0 438.0 L831.6 439.4 L832.2 440.9 L832.7 442.4 L833.1 443.9 L833.6 445.4 L834.0 447.0 L834.3 448.5 L834.6 450.0 L834.8 451.4 L835.0 452.9 L835.2 454.3 L835.3 455.6 L835.3 457.0 L835.3 458.2 L835.3 459.4 L835.2 460.5 L835.0 461.6 L834.8 462.5 L834.5 463.4 L834.2 464.2 L833.9 464.9 L833.5 465.5 L833.0 466.0 L832.5 466.5 L832.0 466.8 L831.5 467.0 L830.9 467.1" stroke-width="0.9" fill="none"/><path d="M816.9 423.8 L817.4 423.5 L817.8 423.4 L818.4 423.4 L818.9 423.4 L819.5 423.6 L820.1 423.9 L820.7 424.3 L821.4 424.7 L822.0 425.3 L822.7 426.0 L823.4 426.8 L824.1 427.6 L824.8 428.5 L825.5 429.5 L826.1 430.6 L826.8 431.8 L827.5 433.0 L828.1 434.3 L828.7 435.6 L829.4 437.0 L829.9 438.4 L830.5 439.8 L831.0 441.3 L831.5 442.8 L832.0 444.3 L832.4 445.8 L832.8 447.3 L833.2 448.8 L833.5 450.2 L833.8 451.7 L834.0 453.1 L834.2 454.4 L834.3 455.8 L834.4 457.1 L834.4 458.3 L834.4 459.4 L834.4 460.5 L834.3 461.5 L834.1 462.5 L833.9 463.3 L833.7 464.1 L833.4 464.8 L833.1 465.4 L832.7 465.8 L832.3 466.2 L831.9 466.5 L831.4 466.7 L830.9 466.8" stroke-width="1.1" fill="none"/><path d="M831.1 466.7 L830.4 466.9 L829.7 466.9 L828.9 466.9 L828.1 466.8 L827.3 466.7 L826.5 466.4 L825.7 466.0 L824.8 465.5 L824.0 465.0 L823.2 464.3 L822.3 463.6 L821.5 462.8 L820.7 462.0 L819.9 461.0 L819.1 460.0 L818.4 458.9 L817.7 457.8 L816.9 456.6 L816.3 455.4 L815.6 454.1 L815.0 452.8 L814.5 451.4 L813.9 450.0 L813.5 448.6 L813.0 447.2 L812.6 445.8 L812.3 444.4 L812.0 443.0 L811.8 441.6 L811.6 440.2 L811.5 438.8 L811.4 437.4 L811.4 436.1 L811.4 434.8 L811.5 433.6 L811.6 432.4 L811.8 431.3 L812.1 430.2 L812.4 429.2 L812.7 428.3 L813.1 427.4 L813.6 426.7 L814.1 425.9 L814.6 425.3 L815.2 424.8 L815.8 424.3 L816.5 424.0 L817.1 423.7" stroke-width="1.0" fill="none"/><path d="M827.9 461.6 L827.0 461.7 L826.0 461.6 L825.0 461.2 L823.9 460.5 L822.8 459.6 L821.7 458.5 L820.6 457.1 L819.5 455.5 L818.5 453.7 L817.6 451.8 L816.8 449.9 L816.1 447.8 L815.4 445.7 L814.9 443.6 L814.6 441.5 L814.3 439.5 L814.3 437.6 L814.3 435.9 L814.5 434.3 L814.9 432.9 L815.4 431.7 L816.0 430.8 L816.7 430.1 L817.5 429.6 L818.4 429.5 L819.4 429.6 L820.5 430.0 L821.5 430.7 L822.6 431.6 L823.7 432.8 L824.8 434.2 L825.9 435.8 L826.9 437.5 L827.8 439.4 L828.6 441.4 L829.4 443.5 L830.0 445.6 L830.5 447.7 L830.8 449.7 L831.1 451.7 L831.2 453.6 L831.1 455.4 L830.9 457.0 L830.5 458.4 L830.1 459.6 L829.4 460.5 L828.7 461.2 L827.9 461.6 Z" stroke-width="1.5" fill="#fff"/><path d="M825.8 458.7 L825.1 458.8 L824.3 458.7 L823.5 458.4 L822.7 457.8 L821.8 457.1 L821.0 456.1 L820.1 455.0 L819.3 453.8 L818.5 452.4 L817.8 450.8 L817.1 449.3 L816.5 447.6 L816.0 445.9 L815.6 444.3 L815.3 442.6 L815.1 441.0 L815.1 439.5 L815.1 438.1 L815.3 436.8 L815.5 435.7 L815.9 434.8 L816.3 434.1 L816.9 433.5 L817.5 433.2 L818.2 433.1 L819.0 433.2 L819.8 433.5 L820.6 434.1 L821.5 434.8 L822.4 435.7 L823.2 436.9 L824.0 438.1 L824.8 439.5 L825.6 441.0 L826.2 442.6 L826.8 444.3 L827.3 445.9 L827.7 447.6 L828.0 449.3 L828.2 450.9 L828.3 452.4 L828.2 453.8 L828.1 455.0 L827.8 456.1 L827.5 457.1 L827.0 457.8 L826.4 458.4 L825.8 458.7 Z" stroke-width="1.0" fill="none"/><path d="M823.3 454.4 L822.8 454.5 L822.3 454.4 L821.8 454.2 L821.2 453.9 L820.6 453.4 L820.1 452.8 L819.5 452.1 L819.0 451.3 L818.5 450.4 L818.0 449.4 L817.6 448.4 L817.2 447.4 L816.9 446.3 L816.6 445.2 L816.4 444.1 L816.3 443.1 L816.3 442.2 L816.3 441.3 L816.4 440.4 L816.6 439.7 L816.9 439.1 L817.2 438.6 L817.5 438.3 L818.0 438.1 L818.4 438.0 L818.9 438.1 L819.5 438.3 L820.0 438.6 L820.6 439.1 L821.2 439.7 L821.7 440.4 L822.3 441.2 L822.8 442.1 L823.2 443.1 L823.7 444.1 L824.0 445.1 L824.4 446.2 L824.6 447.3 L824.8 448.4 L824.9 449.4 L825.0 450.3 L824.9 451.2 L824.8 452.1 L824.6 452.8 L824.4 453.4 L824.1 453.9 L823.7 454.2 L823.3 454.4 Z" stroke-width="1.3" fill="none"/><path d="M821.3 450.6 L821.0 450.6 L820.8 450.6 L820.5 450.5 L820.2 450.3 L819.9 450.1 L819.6 449.8 L819.3 449.5 L819.0 449.1 L818.7 448.7 L818.5 448.2 L818.3 447.7 L818.1 447.2 L817.9 446.7 L817.8 446.1 L817.7 445.6 L817.7 445.1 L817.7 444.6 L817.7 444.2 L817.8 443.8 L817.9 443.4 L818.1 443.1 L818.3 442.9 L818.5 442.7 L818.7 442.6 L819.0 442.5 L819.2 442.5 L819.5 442.6 L819.8 442.8 L820.1 443.0 L820.4 443.3 L820.7 443.6 L821.0 444.0 L821.3 444.5 L821.5 444.9 L821.7 445.4 L821.9 445.9 L822.1 446.5 L822.2 447.0 L822.3 447.5 L822.3 448.0 L822.3 448.5 L822.3 448.9 L822.2 449.4 L822.1 449.7 L821.9 450.0 L821.7 450.3 L821.5 450.4 L821.3 450.6 Z" stroke-width="1.2" fill="none"/><path d="M817.9 432.2 L819.8 430.1 L822.7 430.9 L821.5 434.1 Z" stroke-width="1.3" fill="#fff"/><path d="M826.0 460.6 L828.5 463.2 L831.7 462.2 L829.4 459.6 Z" stroke-width="1.3" fill="#fff"/><path d="M814.6 434.1 L816.9 435.6 L814.8 438.4" stroke-width="1.2" fill="none"/><path d="M830.2 437.2 L832.3 440.5 L830.8 443.4" stroke-width="1.2" fill="none"/><path d="M800.9 493.9 L799.2 494.3 L797.3 494.3 L795.3 493.7 L793.1 492.7 L790.9 491.3 L788.7 489.4 L786.5 487.1 L784.3 484.4 L782.2 481.5 L780.3 478.2 L778.5 474.8 L776.8 471.2 L775.4 467.5 L774.2 463.8 L773.3 460.2 L772.6 456.6 L772.3 453.2 L772.2 450.0 L772.4 447.1 L772.9 444.5 L773.6 442.3 L774.7 440.5 L776.0 439.1 L777.5 438.2 L779.2 437.7 L781.1 437.8 L783.1 438.3 L785.2 439.3 L787.4 440.8 L789.6 442.7 L791.9 444.9 L794.0 447.6 L796.1 450.6 L798.1 453.8 L799.9 457.2 L801.5 460.8 L803.0 464.5 L804.1 468.2 L805.1 471.9 L805.7 475.4 L806.1 478.8 L806.2 482.0 L806.0 484.9 L805.5 487.5 L804.7 489.8 L803.7 491.6 L802.4 492.9 L800.9 493.9 Z" stroke-width="1.7" fill="#fff"/><path d="M794.1 492.2 L792.8 491.3 L791.5 490.3 L790.2 489.2 L788.9 487.9 L787.6 486.5 L786.3 484.9 L785.1 483.3 L783.8 481.5 L782.7 479.6 L781.5 477.6 L780.4 475.6 L779.4 473.5 L778.5 471.3 L777.6 469.2 L776.8 467.0 L776.1 464.8 L775.4 462.6 L774.9 460.4 L774.5 458.3 L774.1 456.2 L773.9 454.2 L773.8 452.2 L773.7 450.4 L773.8 448.6 L774.0 447.0 L774.3 445.5 L774.6 444.1 L775.1 442.9 L775.7 441.8 L776.4 440.8 L777.1 440.1 L778.0 439.5 L778.9 439.0 L779.8 438.8 L780.9 438.7 L782.0 438.8 L783.2 439.1 L784.4 439.5 L785.6 440.1 L786.9 440.9 L788.2 441.9 L789.4 443.0 L790.8 444.2 L792.0 445.6 L793.3 447.1 L794.6 448.8 L795.8 450.5 L797.0 452.4" stroke-width="0.8" fill="none"/><path d="M797.2 486.4 L796.2 486.7 L795.0 486.6 L793.6 486.2 L792.3 485.4 L790.8 484.4 L789.3 483.0 L787.9 481.3 L786.4 479.4 L785.0 477.3 L783.6 475.0 L782.4 472.5 L781.2 470.0 L780.2 467.4 L779.3 464.8 L778.6 462.2 L778.1 459.7 L777.8 457.3 L777.6 455.1 L777.7 453.1 L777.9 451.3 L778.3 449.7 L778.9 448.5 L779.7 447.6 L780.7 447.0 L781.7 446.7 L782.9 446.8 L784.2 447.2 L785.6 448.0 L787.1 449.1 L788.6 450.5 L790.0 452.1 L791.5 454.0 L792.9 456.2 L794.3 458.5 L795.5 460.9 L796.7 463.5 L797.7 466.1 L798.6 468.7 L799.3 471.3 L799.8 473.8 L800.1 476.1 L800.3 478.4 L800.2 480.4 L800.0 482.2 L799.6 483.7 L799.0 484.9 L798.2 485.9 L797.2 486.4 Z" stroke-width="1.5" fill="none"/><path d="M799.0 484.9 L798.6 485.6 L798.2 486.2 L797.7 486.7 L797.1 487.1 L796.5 487.3 L795.9 487.5 L795.2 487.5 L794.4 487.4 L793.7 487.2 L792.9 486.9 L792.0 486.4 L791.2 485.9 L790.3 485.2 L789.4 484.4 L788.5 483.5 L787.7 482.5 L786.8 481.5 L785.9 480.3 L785.0 479.1 L784.2 477.8 L783.4 476.4 L782.6 475.0 L781.8 473.5 L781.1 472.0 L780.4 470.5 L779.8 469.0 L779.2 467.4 L778.7 465.8 L778.2 464.3 L777.8 462.7 L777.4 461.2 L777.1 459.7 L776.9 458.3 L776.7 456.9 L776.6 455.5 L776.6 454.3 L776.6 453.1 L776.8 451.9 L776.9 450.9 L777.2 450.0 L777.5 449.1 L777.8 448.4 L778.3 447.8 L778.8 447.3 L779.3 446.9 L779.9 446.6 L780.5 446.4 L781.2 446.4" stroke-width="0.9" fill="none"/><path d="M750.6 453.7 L751.4 453.3 L752.3 453.1 L753.2 453.0 L754.1 453.0 L755.1 453.1 L756.1 453.3 L757.1 453.6 L758.1 454.1 L759.1 454.6 L760.2 455.2 L761.2 455.9 L762.3 456.7 L763.3 457.7 L764.4 458.7 L765.4 459.7 L766.4 460.9 L767.4 462.2 L768.4 463.5 L769.4 464.9 L770.3 466.3 L771.2 467.8 L772.0 469.3 L772.8 470.9 L773.6 472.6 L774.3 474.2 L775.0 475.9 L775.6 477.6 L776.2 479.4 L776.7 481.1 L777.2 482.8 L777.6 484.6 L777.9 486.3 L778.2 488.0 L778.4 489.6 L778.6 491.2 L778.6 492.8 L778.7 494.4 L778.6 495.9 L778.5 497.3 L778.3 498.7 L778.1 500.0 L777.8 501.2 L777.4 502.4 L777.0 503.5 L776.5 504.5 L776.0 505.4 L775.4 506.2 L774.8 506.9" stroke-width="1.5" fill="none"/><path d="M743.1 455.9 L752.5 452.1" stroke-width="1.4" fill="none"/><path d="M764.2 511.3 L776.6 502.3" stroke-width="1.4" fill="none"/><path d="M764.0 511.1 L762.2 511.6 L760.2 511.5 L758.1 511.0 L755.9 510.0 L753.7 508.6 L751.5 506.7 L749.3 504.4 L747.2 501.8 L745.2 498.9 L743.3 495.7 L741.6 492.3 L740.1 488.7 L738.8 485.1 L737.8 481.4 L737.1 477.8 L736.6 474.3 L736.4 470.9 L736.5 467.7 L736.9 464.9 L737.6 462.3 L738.6 460.1 L739.8 458.3 L741.2 457.0 L742.9 456.1 L744.7 455.6 L746.7 455.7 L748.8 456.2 L751.0 457.2 L753.2 458.6 L755.4 460.5 L757.6 462.8 L759.7 465.4 L761.7 468.3 L763.6 471.5 L765.3 474.9 L766.8 478.5 L768.1 482.1 L769.1 485.8 L769.8 489.4 L770.3 492.9 L770.5 496.3 L770.4 499.4 L770.0 502.3 L769.3 504.9 L768.3 507.1 L767.1 508.9 L765.7 510.2 L764.0 511.1 Z" stroke-width="1.6" fill="#fff"/><path d="M756.6 503.9 L755.3 504.1 L754.0 504.1 L752.6 503.7 L751.1 503.1 L749.6 502.1 L748.1 500.8 L746.6 499.2 L745.2 497.4 L743.8 495.4 L742.6 493.2 L741.4 490.9 L740.4 488.4 L739.5 486.0 L738.8 483.4 L738.3 481.0 L738.0 478.6 L737.8 476.3 L737.9 474.1 L738.1 472.1 L738.6 470.4 L739.2 468.9 L740.0 467.7 L741.0 466.8 L742.1 466.1 L743.3 465.9 L744.7 465.9 L746.1 466.3 L747.5 467.0 L749.0 467.9 L750.6 469.2 L752.0 470.8 L753.5 472.6 L754.8 474.6 L756.1 476.8 L757.3 479.1 L758.3 481.6 L759.2 484.1 L759.9 486.6 L760.4 489.0 L760.7 491.5 L760.9 493.8 L760.8 495.9 L760.5 497.9 L760.1 499.6 L759.5 501.1 L758.6 502.3 L757.7 503.3 L756.6 503.9 Z" stroke-width="1.5" fill="none"/><path d="M755.9 501.9 L755.4 501.6 L754.8 501.3 L754.3 500.9 L753.8 500.5 L753.2 500.0 L752.7 499.6 L752.2 499.0 L751.6 498.5 L751.1 497.9 L750.6 497.3 L750.1 496.6 L749.6 496.0 L749.1 495.3 L748.6 494.5 L748.1 493.8 L747.7 493.0 L747.2 492.2 L746.8 491.4 L746.4 490.6 L746.0 489.7 L745.6 488.9 L745.2 488.0 L744.9 487.1 L744.5 486.2 L744.2 485.3 L743.9 484.4 L743.7 483.5 L743.4 482.6 L743.2 481.7 L743.0 480.9 L742.9 480.0 L742.7 479.1 L742.6 478.2 L742.5 477.4 L742.4 476.5 L742.4 475.7 L742.3 474.9 L742.3 474.1 L742.4 473.4 L742.4 472.6 L742.5 471.9 L742.6 471.3 L742.7 470.6 L742.9 470.0 L743.1 469.4 L743.3 468.8 L743.5 468.3 L743.7 467.8" stroke-width="1.0" fill="none"/><path d="M757.4 498.6 L757.0 498.2 L756.6 497.8 L756.2 497.4 L755.7 496.9 L755.3 496.5 L754.9 496.0 L754.5 495.5 L754.1 494.9 L753.7 494.4 L753.3 493.8 L753.0 493.2 L752.6 492.6 L752.2 492.0 L751.9 491.4 L751.5 490.8 L751.2 490.1 L750.8 489.5 L750.5 488.8 L750.2 488.1 L749.9 487.4 L749.6 486.8 L749.3 486.1 L749.1 485.4 L748.8 484.7 L748.6 484.0 L748.4 483.2 L748.2 482.5 L748.0 481.8 L747.8 481.1 L747.6 480.4 L747.4 479.7 L747.3 479.0 L747.2 478.3 L747.1 477.6 L747.0 476.9 L746.9 476.3 L746.8 475.6 L746.8 475.0 L746.8 474.3 L746.8 473.7 L746.8 473.1 L746.8 472.5 L746.8 471.9 L746.9 471.3 L746.9 470.7 L747.0 470.2 L747.1 469.7 L747.2 469.2" stroke-width="1.0" fill="none"/><path d="M759.9 492.5 L759.6 492.1 L759.4 491.7 L759.1 491.4 L758.9 491.0 L758.7 490.6 L758.5 490.2 L758.2 489.8 L758.0 489.5 L757.8 489.1 L757.6 488.6 L757.4 488.2 L757.2 487.8 L756.9 487.4 L756.7 487.0 L756.6 486.6 L756.4 486.1 L756.2 485.7 L756.0 485.3 L755.8 484.8 L755.6 484.4 L755.5 484.0 L755.3 483.5 L755.2 483.1 L755.0 482.6 L754.9 482.2 L754.7 481.7 L754.6 481.3 L754.4 480.9 L754.3 480.4 L754.2 480.0 L754.1 479.5 L754.0 479.1 L753.9 478.6 L753.8 478.2 L753.7 477.8 L753.6 477.3 L753.5 476.9 L753.4 476.4 L753.4 476.0 L753.3 475.6 L753.3 475.2 L753.2 474.7 L753.2 474.3 L753.1 473.9 L753.1 473.5 L753.1 473.1 L753.1 472.7 L753.0 472.3" stroke-width="2.6" fill="none"/><path d="M755.1 455.7 L756.0 457.8 L758.8 457.3 L759.3 455.7" stroke-width="1.3" fill="none"/><path d="M758.6 456.6 L758.5 456.8 L758.5 457.0 L758.4 457.2 L758.3 457.3 L758.2 457.5 L758.1 457.6 L757.9 457.8 L757.8 457.9 L757.6 457.9 L757.4 458.0 L757.2 458.0 L757.0 458.0 L756.7 458.0 L756.5 458.0 L756.3 457.9 L756.2 457.9 L756.0 457.8 L755.8 457.6 L755.7 457.5 L755.6 457.3 L755.5 457.2 L755.4 457.0 L755.4 456.8 L755.4 456.6 L755.4 456.5 L755.4 456.3 L755.5 456.1 L755.6 455.9 L755.7 455.8 L755.8 455.7 L756.0 455.5 L756.2 455.4 L756.3 455.3 L756.5 455.3 L756.7 455.3 L757.0 455.2 L757.2 455.3 L757.4 455.3 L757.6 455.3 L757.8 455.4 L757.9 455.5 L758.1 455.7 L758.2 455.8 L758.3 455.9 L758.4 456.1 L758.5 456.3 L758.5 456.5 L758.6 456.6 Z" stroke-width="1.2" fill="none"/></g><path d="M918.1 496.1 L904.1 476.1" stroke="#000" stroke-width="1" fill="none"/><path d="M897.6 466.7 L907.1 474.0 L901.2 478.2 Z" fill="#000" stroke="#fff" stroke-width="1.2" paint-order="stroke"/><path d="M840.0 501.7 L817.1 489.1" stroke="#000" stroke-width="1" fill="none"/><path d="M807.0 483.5 L818.8 485.9 L815.4 492.2 Z" fill="#000" stroke="#fff" stroke-width="1.2" paint-order="stroke"/><path d="M803.0 511.2 L788.0 505.9" stroke="#000" stroke-width="1" fill="none"/><path d="M777.1 502.1 L789.2 502.5 L786.8 509.3 Z" fill="#000" stroke="#fff" stroke-width="1.2" paint-order="stroke"/><circle cx="925.2" cy="505.6" r="10.6" fill="#fff" stroke="#000" stroke-width="1"/><text x="925.2" y="510.0" text-anchor="middle" font-family="Liberation Sans" font-weight="bold" font-size="12.4" fill="#000">1</text><circle cx="850.0" cy="506.5" r="10.6" fill="#fff" stroke="#000" stroke-width="1"/><text x="850.0" y="510.9" text-anchor="middle" font-family="Liberation Sans" font-weight="bold" font-size="12.4" fill="#000">3</text><circle cx="813.4" cy="514.3" r="10.6" fill="#fff" stroke="#000" stroke-width="1"/><text x="813.4" y="518.7" text-anchor="middle" font-family="Liberation Sans" font-weight="bold" font-size="12.4" fill="#000">2</text><text x="697.6" y="523.4" font-family="Liberation Sans" font-size="9.1" fill="#000">19984957</text></svg>
<svg class="abs" style="left:367px;top:432px" width="260" height="178" viewBox="689 559 260 178"><g transform="translate(-89.5 391.7) scale(1.05)"><g transform="translate(0,0)" fill="none" stroke="#000" stroke-width="1" stroke-linejoin="round">
<path d="M820.6 200.4 V165.6 Q820.6 164.2 822.8 164.2 Q825 164.2 825 165.6 V200.4" stroke-width="0.9"/>
<path d="M808.1 203 V200.6 H839.8 V203" />
<path d="M794.6 222 V209.6 Q794.6 208 796 207.2 L802.3 203.4 H843.9 L851.8 207.2 Q853.2 208 853.2 209.6 V222" stroke-width="1.1"/>
<path d="M797 208.8 H850.8" stroke-width="0.9"/>
<path d="M794.6 221.4 H853.2 M795.4 222.8 H852.4" stroke-width="0.9"/>
<rect x="791.2" y="224.3" width="65.6" height="3.2" stroke-width="1.1"/>
<g stroke-width="1">
<path d="M792.6 227.6 V241.2"/>
<path d="M799.8 227.6 V241.2" stroke-width="2"/>
<path d="M811.1 227.6 V241.2 M813.4 227.6 V241.2"/>
<path d="M825.1 227.6 V241.2 M828 227.6 V241.2"/>
<path d="M837.4 227.6 V241.2"/>
<path d="M844.5 227.6 V241.2 M846.8 227.6 V241.2"/>
<path d="M854.6 227.6 V241.2"/>
<path d="M828.6 232 H837 M828.6 233.8 H837 M828.6 236.2 H837" stroke-width="0.9" stroke="#333"/>
</g>
<path d="M800.4 291.8 H779.2 V244.6 Q779.2 241.4 782.4 241.4 H865.8 Q869 241.4 869 244.6 V291.8 H845.2" stroke-width="1.1"/>
<path d="M782.4 291.8 Q782.8 289.2 785.8 289.2 Q788.8 289.2 789.4 291.8 M855.6 291.8 Q856.2 289.2 859.2 289.2 Q862.2 289.2 862.6 291.8" stroke-width="1"/>
<!-- connector outer -->
<path d="M800.4 311.6 V277.6 Q800.4 275.8 802.2 275.8 H806.4 Q807.8 275.8 807.8 274.4 V267 Q807.8 264.8 810 264.8 H833.4 Q835.6 264.8 835.6 267 V272.6 Q835.6 275.8 838.8 275.8 H843.4 Q845.2 275.8 845.2 277.6 V311.6 H800.4 Z" stroke-width="1.4"/>
<path d="M802.6 308 V279.6 Q802.6 278.2 804 278.2 H808.4 Q810.2 278.2 810.2 276.4 V269 Q810.2 267.2 812 267.2 H831.4 Q833.2 267.2 833.2 269 V274.2 Q833.2 278.2 837.2 278.2 H841.6 Q843 278.2 843 279.6 V308" stroke-width="1"/>
<path d="M804.2 306.4 H841" stroke-width="1.2"/>
<path d="M805 311.4 V308.2 H809.2 V311.4 M836.4 311.4 V308.2 H840.6 V311.4" stroke-width="1"/>
<path d="M843.9 300 V310" stroke-width="1.6"/>
<rect x="818.6" y="268" width="8.8" height="4" stroke-width="0.9"/>
<!-- terminals -->
<g fill="#555" stroke="#111" stroke-width="0.8">
<rect x="806.4" y="285.4" width="14" height="4.6"/><rect x="824.8" y="285.4" width="13.8" height="4.6"/>
<rect x="806.4" y="292.8" width="14" height="4.8"/><rect x="824.8" y="292.8" width="13.8" height="4.8"/>
</g>
<path d="M806.4 287.4 H820.4 M824.8 287.4 H838.6 M806.4 295 H820.4 M824.8 295 H838.6" stroke="#bbb" stroke-width="0.6"/>
<path d="M804.2 291.4 H840.8" stroke-width="1.4"/>
</g></g><path d="M722.6 666.7 L748.4 683.8" stroke="#000" stroke-width="1" fill="none"/><path d="M758.4 690.4 L746.1 687.3 L750.7 680.3 Z" fill="#000" stroke="#fff" stroke-width="1.2" paint-order="stroke"/><path d="M724.2 690.4 L743.0 696.2" stroke="#000" stroke-width="1" fill="none"/><path d="M754.5 699.7 L741.8 700.2 L744.3 692.2 Z" fill="#000" stroke="#fff" stroke-width="1.2" paint-order="stroke"/><path d="M826.7 671.2 L801.1 683.6" stroke="#000" stroke-width="1" fill="none"/><path d="M790.3 688.8 L799.3 679.8 L802.9 687.4 Z" fill="#000" stroke="#fff" stroke-width="1.2" paint-order="stroke"/><path d="M828.6 705.9 L805.0 704.0" stroke="#000" stroke-width="1" fill="none"/><path d="M793.0 703.1 L805.3 699.9 L804.6 708.2 Z" fill="#000" stroke="#fff" stroke-width="1.2" paint-order="stroke"/><g font-family="Liberation Sans" font-weight="bold" font-size="12.4" fill="#000"><text x="709" y="666">30</text><text x="832" y="671">50</text><text x="695.4" y="693">ACC</text><text x="830.2" y="708.2">19</text></g><text x="695.8" y="729.2" font-family="Liberation Sans" font-size="9.1" fill="#000">19984955</text><g fill="none" stroke="#6a6a6a" stroke-width="0.9"><path d="M871.3 596.3 V695.4 Q871.3 702.4 878 702.4 H880.8"/><path d="M887.9 596.3 V684.2"/><path d="M914.6 596.3 V684.2"/><path d="M930.2 596.3 V695.4 Q930.2 702.4 924 702.4 H921.9"/><path d="M880.8 684.2 H890 V674.4 H912.1 V684.2 H921.9 V711.9 H880.8 Z" stroke="#555" stroke-width="1"/><path d="M901 684 V705.6 M888.5 696.7 H913.5" stroke-width="0.8"/><rect x="888.5" y="690.2" width="9.8" height="3.4" stroke="#444" stroke-width="0.8"/><rect x="903.8" y="690.2" width="9.8" height="3.4" stroke="#444" stroke-width="0.8"/><rect x="888.5" y="699.4" width="9.8" height="3.4" stroke="#444" stroke-width="0.8"/><rect x="903.8" y="699.4" width="9.8" height="3.4" stroke="#444" stroke-width="0.8"/></g><text transform="translate(874.9 592.3) rotate(-90)" textLength="9.0" lengthAdjust="spacingAndGlyphs" font-family="Liberation Sans" font-weight="bold" font-size="8.6" fill="#000">19</text><text transform="translate(890.1 592.3) rotate(-90)" textLength="9.0" lengthAdjust="spacingAndGlyphs" font-family="Liberation Sans" font-weight="bold" font-size="8.6" fill="#000">50</text><text transform="translate(918.0 592.3) rotate(-90)" textLength="9.0" lengthAdjust="spacingAndGlyphs" font-family="Liberation Sans" font-weight="bold" font-size="8.6" fill="#000">30</text><text transform="translate(933.8 592.3) rotate(-90)" textLength="18.6" lengthAdjust="spacingAndGlyphs" font-family="Liberation Sans" font-weight="bold" font-size="8.6" fill="#000">ACC</text><text transform="translate(869.3 665.6) rotate(-90)" textLength="29.0" lengthAdjust="spacingAndGlyphs" font-family="Liberation Sans" font-weight="bold" font-size="8.6" fill="#000">WHITE</text><text transform="translate(885.3 665.6) rotate(-90)" textLength="31.8" lengthAdjust="spacingAndGlyphs" font-family="Liberation Sans" font-weight="bold" font-size="8.6" fill="#000">GREEN</text><text transform="translate(912.4 665.6) rotate(-90)" textLength="18.6" lengthAdjust="spacingAndGlyphs" font-family="Liberation Sans" font-weight="bold" font-size="8.6" fill="#000">RED</text><text transform="translate(929.0 665.6) rotate(-90)" textLength="61.0" lengthAdjust="spacingAndGlyphs" font-family="Liberation Sans" font-weight="bold" font-size="8.6" fill="#000">RED/YELLOW</text></svg>
</div>
<div id="leftpanel">
<svg class="abs" style="left:0;top:0" width="44" height="160" viewBox="0 127 44 160" fill="none" stroke="#6a6a6a" stroke-width="2" stroke-linejoin="round">
<path d="M19.6 155.2 H15.4 V169.6 H26.6 V166.2"/>
<path d="M20.6 150.2 H27.4 L32 154.8 V164.6 H20.6 Z" fill="#fafafa"/>
<path d="M27.2 150.4 V155 H31.8" stroke-width="1.3"/>
<path d="M16.4 197.2 H28.2 V216.6 L22.3 211.2 L16.4 216.6 Z"/>
<path d="M19.8 256.4 L27.2 250.4 A2.1 2.1 0 0 0 24.4 247.4 L15.4 254.4 A3.9 3.9 0 0 0 20.4 260.4 L29.6 253.2 A5.4 5.4 0 0 0 22.8 244.6 L16.6 249.6" transform="translate(-0.6,0.6)" stroke-linecap="round" stroke-width="1.9"/>
</svg>

</div><div id="leftborder"></div><div id="leftsplit"></div>
<div id="vscroll">
<div class="abs" style="left:0;top:0;width:15px;height:17px;background:#fff;border-bottom:1px solid #e3e3e3"></div>
<svg class="abs" style="left:3px;top:6px" width="9" height="7" viewBox="0 0 9 7"><path d="M0.8 5.6 L4.5 1.6 L8.2 5.6" fill="none" stroke="#3c3c3c" stroke-width="1.2"/></svg>
<div class="abs" style="left:0;top:57px;width:15px;height:16px;background:#dcdcdc"></div>
<div class="abs" style="left:0;top:624px;width:15px;height:15px;background:#fff;border-top:1px solid #e3e3e3"></div>
<svg class="abs" style="left:3px;top:629px" width="9" height="7" viewBox="0 0 9 7"><path d="M0.8 1.4 L4.5 5.4 L8.2 1.4" fill="none" stroke="#3c3c3c" stroke-width="1.2"/></svg>

</div><div id="rightsplit"></div><div id="rightborder"></div><div id="rightpanel">
<svg class="abs" style="left:0;top:0" width="46" height="639" viewBox="1320 127 46 639" fill="none" stroke-linejoin="round">
<!-- search/zoom -->
<g stroke="#606060" stroke-width="2.3"><circle cx="1340.6" cy="148" r="6.2"/><path d="M1345.6 153 L1351.8 159" stroke-linecap="round" stroke-width="2.5"/></g>
<path d="M1339.6 145.2 V150.8 L1336.8 148 Z M1341.6 145.2 V150.8 L1344.4 148 Z" fill="#666"/>
<path d="M1329 173.5 H1357" stroke="#d4d4d4" stroke-width="1"/>
<!-- export pdf (teal) -->
<path d="M1335.6 187.6 H1344.4 L1348.8 192 V204.2 H1335.6 Q1334.3 204.2 1334.3 203 V188.8 Q1334.3 187.6 1335.6 187.6 Z" fill="#d3e9ea" stroke="#16959b" stroke-width="1.9"/>
<path d="M1341 190.6 C1341.4 193.4 1340.2 197.2 1337.8 199.4 M1341 191.6 C1341.4 194.4 1343.2 196.6 1345.6 197.4 M1338.6 198.2 C1340.6 196.8 1343.4 196.4 1345.4 197" stroke="#16959b" stroke-width="0.9"/>
<circle cx="1349" cy="203" r="6.6" fill="#fafafa"/><circle cx="1349" cy="203" r="5.6" fill="#16959b"/>
<path d="M1345.8 203 H1351.6 M1349.6 200.6 L1352 203 L1349.6 205.4" stroke="#fff" stroke-width="1.5"/>
<!-- organize (pink) -->
<rect x="1333" y="233.6" width="20" height="7.6" fill="#f4d3e6" stroke="#d8288e" stroke-width="2"/>
<rect x="1333" y="245.6" width="8.6" height="7.6" fill="#f4d3e6" stroke="#d8288e" stroke-width="2"/>
<path d="M1345.6 245.6 H1354 M1345.6 249.4 H1354 M1345.6 253.2 H1354" stroke="#d8288e" stroke-width="1.1"/>
<!-- create pdf (red) -->
<path d="M1335.6 279.2 H1344.4 L1348.8 283.6 V296.4 H1335.6 Q1334.3 296.4 1334.3 295.2 V280.4 Q1334.3 279.2 1335.6 279.2 Z" fill="#f9d5d8" stroke="#e0353f" stroke-width="1.9"/>
<path d="M1341 282.2 C1341.4 285 1340.2 288.8 1337.8 291 M1341 283.2 C1341.4 286 1343.2 288.2 1345.6 289 M1338.6 289.8 C1340.6 288.4 1343.4 288 1345.4 288.6" stroke="#e0353f" stroke-width="0.9"/>
<circle cx="1349" cy="295" r="6.6" fill="#fafafa"/><circle cx="1349" cy="295" r="5.6" fill="#e0353f"/>
<path d="M1345.8 295 H1352.2 M1349 291.8 V298.2" stroke="#fff" stroke-width="1.8"/>
<!-- comment (yellow) -->
<path d="M1335.3 325.3 H1350.7 Q1352.7 325.3 1352.7 327.3 V338.8 Q1352.7 340.8 1350.7 340.8 H1344 L1339.2 345.8 V340.8 H1335.3 Q1333.3 340.8 1333.3 338.8 V327.3 Q1333.3 325.3 1335.3 325.3 Z" fill="#d8b32a"/>
<path d="M1337 331.2 H1349 M1337 335 H1349" stroke="#fbf6e0" stroke-width="1.5"/>
<!-- combine (blue) -->
<path d="M1332.4 370.4 H1339.6 L1342.6 373.4 V383 H1332.4 Z" fill="#fafafa" stroke="#5b5fe3" stroke-width="1.9"/>
<path d="M1337.4 372.8 C1337.6 374.8 1336.8 377.6 1335 379.2 M1337.4 373.6 C1337.8 375.6 1339 377.2 1340.6 377.8 M1335.6 378.4 C1337 377.4 1339 377.2 1340.4 377.6" stroke="#5b5fe3" stroke-width="0.9"/>
<path d="M1343.6 369.4 H1351 L1355.2 373.6 V384.6 H1343.6 Z" fill="#5b5fe3"/>
<path d="M1351 369.4 L1355.2 373.6 H1351 Z" fill="#fafafa" opacity="0.75"/>
<path d="M1340.6 378.6 H1344.2 V386.4 H1348.4 L1342.4 392.8 L1336.4 386.4 H1340.6 Z" fill="#5b5fe3" stroke="#fafafa" stroke-width="1.2"/>
<!-- green -->
<rect x="1345.8" y="418.3" width="7.4" height="17.4" rx="0.8" fill="#e3f1d5" stroke="#79c83d" stroke-width="2"/>
<path d="M1343.4 427.4 H1334.4 V435.6 H1343.4" stroke="#79c83d" stroke-width="2.2" stroke-dasharray="2.2 1.5"/>
<path d="M1343 423.4 Q1340 420.6 1336.6 420" stroke="#79c83d" stroke-width="2"/>
<path d="M1333.2 417.2 H1340.4 L1333.2 424.4 Z" fill="#79c83d"/>
<!-- compress (teal) -->
<path d="M1337.4 464 H1346.2 L1350.6 468.4 V480 Q1350.6 481.2 1349.4 481.2 H1337.4 Q1336.1 481.2 1336.1 480 V465.2 Q1336.1 464 1337.4 464 Z" fill="#d6eaeb" stroke="#17969c" stroke-width="1.9"/>
<path d="M1343.4 468.2 V472.6 L1339.6 476 M1343.4 472.6 L1347.2 475.4" stroke="#17969c" stroke-width="1.1"/>
<path d="M1332.6 468.6 L1335.8 472.6 L1332.6 476.6 M1354.2 468.6 L1351 472.6 L1354.2 476.6" stroke="#17969c" stroke-width="1.7" fill="none"/>
<!-- redact pen (pink) -->
<path d="M1332 527.4 L1336 522.8 H1354 V527.4 Z" fill="#da2a8f"/>
<path d="M1347.2 510.8 A2.6 2.6 0 0 1 1351.4 514.6 L1342.2 524.2 L1337.6 520.4 Z" fill="#f6d5e8" stroke="#da2a8f" stroke-width="1.9"/><path d="M1340.4 522.8 H1344.4 L1344 527.4 H1339 Z" fill="#fafafa"/>
<!-- shield -->
<path d="M1343 555.2 C1345.6 557.2 1348 557.6 1350.6 557.6 V565 C1350.6 570 1347.6 573.4 1343 575.4 C1338.4 573.4 1335.4 570 1335.4 565 V557.6 C1338 557.6 1340.4 557.2 1343 555.2 Z" fill="#fafafa" stroke="#5b6cf0" stroke-width="1.9"/>
<path d="M1343 556.4 C1340.8 558 1338.6 558.5 1336.4 558.6 V565 C1336.4 569.4 1339 572.4 1343 574.2 Z" fill="#dadef8"/>
<!-- sign purple -->
<path d="M1346.8 602.6 A2.3 2.3 0 0 1 1350.2 606 L1338.4 618.4 L1332.2 620.2 L1334.2 614.6 Z" fill="#e6d9f6" stroke="#8f4fde" stroke-width="1.9"/>
<path d="M1343.8 620 C1344.2 617.4 1345.6 615.6 1346.4 616.4 C1347 617.2 1345.8 620.6 1347.2 620.6 C1348.6 620.6 1348.8 617.4 1349.8 617.4 C1350.8 617.4 1350.2 620.6 1351.4 620.6 C1352.4 620.6 1353 619.4 1353.8 618.2" stroke="#8f4fde" stroke-width="1.5" fill="none"/>
<!-- doc comment yellow -->
<path d="M1333.4 646.8 H1342.4 L1347.6 652 V664.6 H1333.4 Z" fill="#f4edcb" stroke="#d8b41f" stroke-width="2"/>
<path d="M1342.2 647 V652.2 H1347.4" stroke="#d8b41f" stroke-width="1.4" fill="none"/>
<path d="M1343.5 656.6 H1354.6 V666 H1347.4 L1345 668.8 V666 H1343.5 Z" fill="#d8b41f" stroke="#fafafa" stroke-width="0.8"/>
<path d="M1346 660 H1352.2 M1346 662.8 H1352.2" stroke="#fbf6e0" stroke-width="1"/>
<!-- partial + chevron -->
<path d="M1341.8 696.8 C1342.6 694.4 1344.6 692.6 1347.4 692.6 L1349.2 693.4 L1346.4 696.8 Z M1349.4 695.6 L1351 696.8 H1348.6 Z" fill="#5e5e5e"/>
<path d="M1337.8 706 L1343.1 711 L1348.4 706" stroke="#585858" stroke-width="2" stroke-linejoin="miter"/>
<path d="M1329 721.5 H1357" stroke="#d4d4d4" stroke-width="1"/>
<path d="M1340.6 737.4 V752.6" stroke="#5e5e5e" stroke-width="2.4"/>
<path d="M1343.6 745 H1352 M1348.4 741 L1352.4 745 L1348.4 749" stroke="#5e5e5e" stroke-width="2" stroke-linejoin="miter"/>
</svg>

</div>
<div id="bottombar"></div>
<svg class="abs" style="left:49px;top:440px" width="10" height="14" viewBox="0 0 10 14"><path d="M8 2.6 V11.4 L2.6 7 Z" fill="#5a5a5a"/></svg>
<svg class="abs" style="left:1305px;top:440px" width="10" height="14" viewBox="0 0 10 14"><path d="M8 2.6 V11.4 L2.6 7 Z" fill="#5a5a5a"/></svg>
<div class="abs" style="left:-1px;top:526px;width:54px;height:45px;border:1px solid #1a1a1a;background:linear-gradient(#2f93cb 0%,#5aa9d6 30%,#a9cfe6 65%,#f4f8fb 100%);overflow:hidden">
<div class="abs" style="left:15px;top:4px;font-size:10.6px;line-height:14px;color:#f3f01a;white-space:pre;letter-spacing:-0.1px">0.0 Mb</div>
<svg class="abs" style="left:0;top:0" width="52" height="45" viewBox="0 528 52 45">
<g stroke-width="1.2">
<path d="M0.6 543.5 V561.5" stroke="#2fe02f"/><path d="M0.6 561.5 V571" stroke="#f5f02a"/>
<path d="M15.5 554.3 V561.5" stroke="#3fe03f"/><path d="M15.5 561.5 V571" stroke="#f5f02a"/>
<path d="M20.5 565.3 V571" stroke="#f5f02a"/>
<path d="M30.5 554.3 V561.5" stroke="#3fe03f"/><path d="M30.5 561.5 V571" stroke="#f5f02a"/>
<path d="M34.5 553.3 V560.5" stroke="#3fe03f"/><path d="M34.5 560.5 V571" stroke="#f5f02a"/>
<path d="M35.6 565.3 V571" stroke="#f5f02a"/>
<path d="M45.5 560.3 V571" stroke="#f5f02a"/><path d="M46.6 564.3 V571" stroke="#2fe02f"/>
<path d="M50.5 565.3 V571" stroke="#f5f02a"/>
</g></svg>
</div>
<div class="abs" style="left:-1px;top:573px;width:54px;height:10px;border:1px solid #111;background:#fff;overflow:hidden"><div class="abs" style="left:0px;top:-2px;font-size:10px;line-height:12px;color:#fff;white-space:pre;font-weight:bold;text-shadow:-1px 0 #000,1px 0 #000,0 -1px #000,0 1px #000;letter-spacing:0.3px">JL: 0.0</div></div>
<div class="abs" style="left:795px;top:766px;width:143px;height:2px;background:#787878"></div>

</body></html>
